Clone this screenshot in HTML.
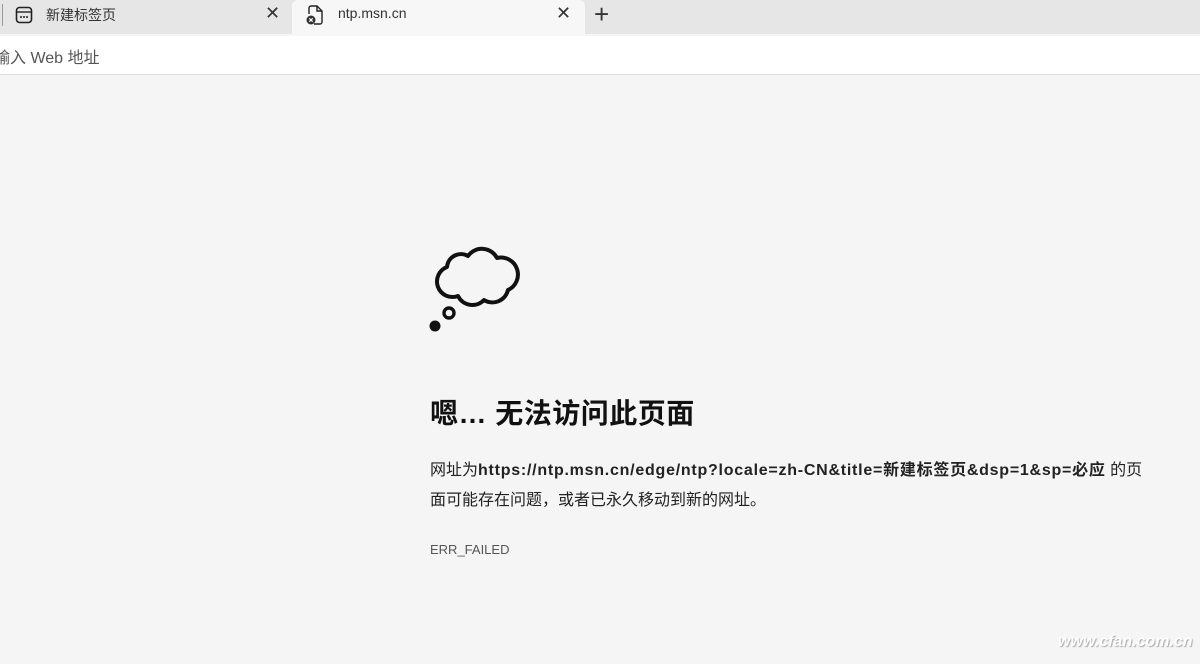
<!DOCTYPE html>
<html><head><meta charset="utf-8"><style>
body{margin:0;width:1200px;height:664px;overflow:hidden;background:#f5f5f5;font-family:"Liberation Sans","Noto Sans CJK SC",sans-serif;position:relative}
.tabbar{position:absolute;left:0;top:0;width:1200px;height:34px;background:#e6e6e6}
.tab2{position:absolute;left:292px;top:0;width:293px;height:36px;background:#f7f7f7;border-radius:6px 6px 0 0}
.addr{position:absolute;left:0;top:36px;width:1200px;height:38px;background:#fff;border-bottom:1px solid #ddd}
.t{position:absolute;font-size:14px;color:#333}
.x{position:absolute;font-size:18px;color:#333}
</style></head><body>
<div class="tabbar">
 <div style="position:absolute;left:2px;top:4px;width:1px;height:22px;background:#999"></div>
 <svg style="position:absolute;left:14px;top:5px" width="20" height="20" viewBox="0 0 20 20"><rect x="2.5" y="2.5" width="15" height="15" rx="3" fill="none" stroke="#222" stroke-width="1.6"/><line x1="3" y1="7" x2="17" y2="7" stroke="#222" stroke-width="1.4"/><circle cx="7" cy="12" r="1" fill="#222"/><circle cx="10" cy="12" r="1" fill="#222"/><circle cx="13" cy="12" r="1" fill="#222"/></svg>
 <div class="t" style="left:46px;top:5px">新建标签页</div>
 <div class="x" style="left:265px;top:3px">✕</div>
 <div class="tab2">
  <svg style="position:absolute;left:13px;top:4px" width="20" height="22" viewBox="0 0 20 22"><path d="M6 2h6l5 5v11a2 2 0 0 1-2 2H9" fill="none" stroke="#222" stroke-width="1.4"/><path d="M12 2v5h5" fill="none" stroke="#222" stroke-width="1.4"/><path d="M6 2a2 2 0 0 0-2 2v6" fill="none" stroke="#222" stroke-width="1.4"/><circle cx="6" cy="16" r="4.5" fill="#333"/><path d="M4.3 14.3l3.4 3.4M7.7 14.3l-3.4 3.4" stroke="#fff" stroke-width="1.2"/></svg>
  <div class="t" style="left:46px;top:5px">ntp.msn.cn</div>
  <div class="x" style="left:264px;top:3px">✕</div>
 </div>
 <div style="position:absolute;left:594px;top:-1px;font-size:26px;color:#333;font-weight:300">+</div>
</div>
<div class="addr"><div style="position:absolute;left:-6px;top:8px;font-size:16px;color:#555">输入 Web 地址</div></div>
<svg style="position:absolute;left:420px;top:235px" width="110" height="105" viewBox="420 235 110 105">
<path d="M447,267 A14,14 0 0 1 468,256 A17,17 0 0 1 497,258 A17,17 0 0 1 508,290 A16,16 0 0 1 484,300 A16,16 0 0 1 458,296 A15,15 0 0 1 447,267 Z" fill="none" stroke="#111" stroke-width="4" stroke-linejoin="round"/>
<circle cx="449" cy="313" r="5" fill="none" stroke="#111" stroke-width="3.4"/>
<circle cx="435" cy="326" r="5.5" fill="#111"/>
</svg>
<div style="position:absolute;left:430px;top:392px;font-size:28px;font-weight:bold;color:#111;letter-spacing:0.5px">嗯… 无法访问此页面</div>
<div style="position:absolute;left:430px;top:456px;width:720px;font-size:16px;line-height:30px;color:#222">网址为<b style="letter-spacing:0.75px">https://ntp.msn.cn/edge/ntp?locale=zh-CN&amp;title=新建标签页&amp;dsp=1&amp;sp=必应</b> 的页面可能存在问题，或者已永久移动到新的网址。</div>
<div style="position:absolute;left:430px;top:542px;font-size:13px;color:#555">ERR_FAILED</div>
<div style="position:absolute;left:1058px;top:633px;font-size:16px;font-style:italic;font-weight:bold;color:#fff;text-shadow:1px 1px 1px #aaa">www.cfan.com.cn</div>
</body></html>
